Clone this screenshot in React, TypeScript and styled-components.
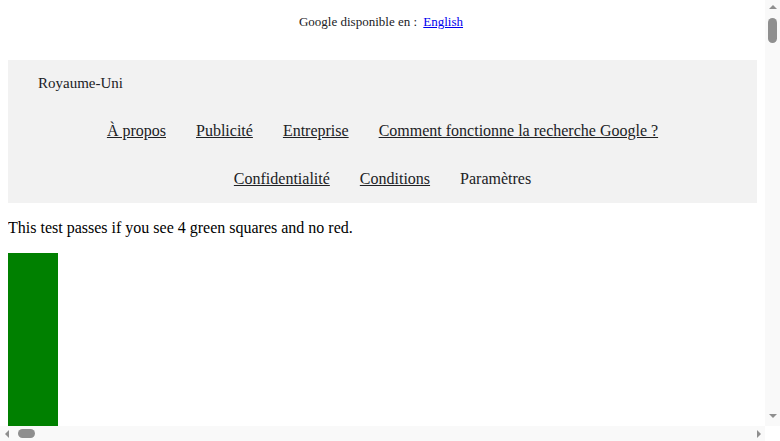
import React, { FC } from 'react';
import styled, { createGlobalStyle } from 'styled-components';

const barSize = '15px';
const trackColor = '#f9f9f9';
const thumbColor = '#8f8f8f';

const GlobalStyle = createGlobalStyle`
  body {
    margin: 8px calc(8px + ${barSize}) 8px 8px;
    font-family: "Liberation Serif", "Times New Roman", serif;
    color: #000;
    background: #fff;
    overflow: hidden;
  }
`;

const LangBar = styled.div`
  box-sizing: border-box;
  height: 52px;
  padding: 7px 3px 0 0;
  text-align: center;
  font-size: 13px;
  line-height: 14px;
  color: #202124;

  a {
    color: #0000ee;
    margin-left: 3px;
  }
`;

const Footer = styled.div`
  background: #f2f2f2;
  color: #202124;
`;

const Country = styled.div`
  padding: 15px 30px 16px;
  font-size: 15px;
  line-height: 16px;
`;

const LinkArea = styled.div`
  display: flex;
  flex-wrap: wrap;
  justify-content: center;
`;

const LinkGroup = styled.div`
  display: flex;
`;

const FooterLink = styled.a<{ $plain?: boolean }>`
  display: block;
  padding: 15px;
  font-size: 16px;
  line-height: 18px;
  color: #202124;
  text-decoration: ${(p) => (p.$plain ? 'none' : 'underline')};
  cursor: pointer;
`;

const Note = styled.p`
  margin: 16px 0;
  font-size: 16px;
`;

const Square = styled.div`
  width: 50px;
  height: 50px;
  background: green;
`;

/* window scrollbars, drawn over the page */
const VBar = styled.div`
  position: fixed;
  top: 0;
  right: 0;
  width: ${barSize};
  height: calc(100% - ${barSize});
  background: ${trackColor};
  display: flex;
  flex-direction: column;
  align-items: center;
`;

const HBar = styled.div`
  position: fixed;
  left: 0;
  bottom: 0;
  width: calc(100% - ${barSize});
  height: ${barSize};
  background: ${trackColor};
  display: flex;
  align-items: center;
`;

const Corner = styled.div`
  position: fixed;
  right: 0;
  bottom: 0;
  width: ${barSize};
  height: ${barSize};
  background: #fff;
`;

const ArrowBox = styled.div`
  width: ${barSize};
  height: ${barSize};
  flex: none;
  display: flex;
  align-items: center;
  justify-content: center;
`;

type Dir = 'up' | 'down' | 'left' | 'right';

const Arrow = styled.div<{ $dir: Dir }>`
  width: 0;
  height: 0;
  border: 4px solid transparent;
  ${(p) =>
    p.$dir === 'up'
      ? `border-bottom-color: ${thumbColor}; border-top-width: 0; margin-top: -1px;`
      : p.$dir === 'down'
      ? `border-top-color: ${thumbColor}; border-bottom-width: 0; margin-top: -5px;`
      : p.$dir === 'left'
      ? `border-right-color: ${thumbColor}; border-left-width: 0; margin-left: -2px;`
      : `border-left-color: ${thumbColor}; border-right-width: 0; margin-left: 2px;`}
`;

const Thumb = styled.div<{ $horizontal?: boolean }>`
  flex: none;
  background: ${thumbColor};
  border-radius: 5px;
  ${(p) =>
    p.$horizontal
      ? 'width: 17px; height: 9px; margin-left: 3px;'
      : 'width: 9px; height: 25px; margin-top: 3px;'}
`;

const Spring = styled.div`
  flex: 1;
`;

const Scrollbars: FC = () => (
  <>
    <VBar>
      <ArrowBox>
        <Arrow $dir="up" />
      </ArrowBox>
      <Thumb />
      <Spring />
      <ArrowBox>
        <Arrow $dir="down" />
      </ArrowBox>
    </VBar>
    <HBar>
      <ArrowBox>
        <Arrow $dir="left" />
      </ArrowBox>
      <Thumb $horizontal />
      <Spring />
      <ArrowBox>
        <Arrow $dir="right" />
      </ArrowBox>
    </HBar>
    <Corner />
  </>
);

const leftLinks = ['À propos', 'Publicité', 'Entreprise', 'Comment fonctionne la recherche Google ?'];
const rightLinks = ['Confidentialité', 'Conditions'];

const App: FC = () => (
  <>
    <GlobalStyle />
    <LangBar>
      Google disponible en : <a href="#">English</a>
    </LangBar>
    <Footer>
      <Country>Royaume-Uni</Country>
      <LinkArea>
        <LinkGroup>
          {leftLinks.map((l) => (
            <FooterLink key={l}>{l}</FooterLink>
          ))}
        </LinkGroup>
        <LinkGroup>
          {rightLinks.map((l) => (
            <FooterLink key={l}>{l}</FooterLink>
          ))}
          <FooterLink $plain>Paramètres</FooterLink>
        </LinkGroup>
      </LinkArea>
    </Footer>
    <Note>This test passes if you see 4 green squares and no red.</Note>
    {[0, 1, 2, 3].map((i) => (
      <Square key={i} />
    ))}
    <Scrollbars />
  </>
);

export default App;
